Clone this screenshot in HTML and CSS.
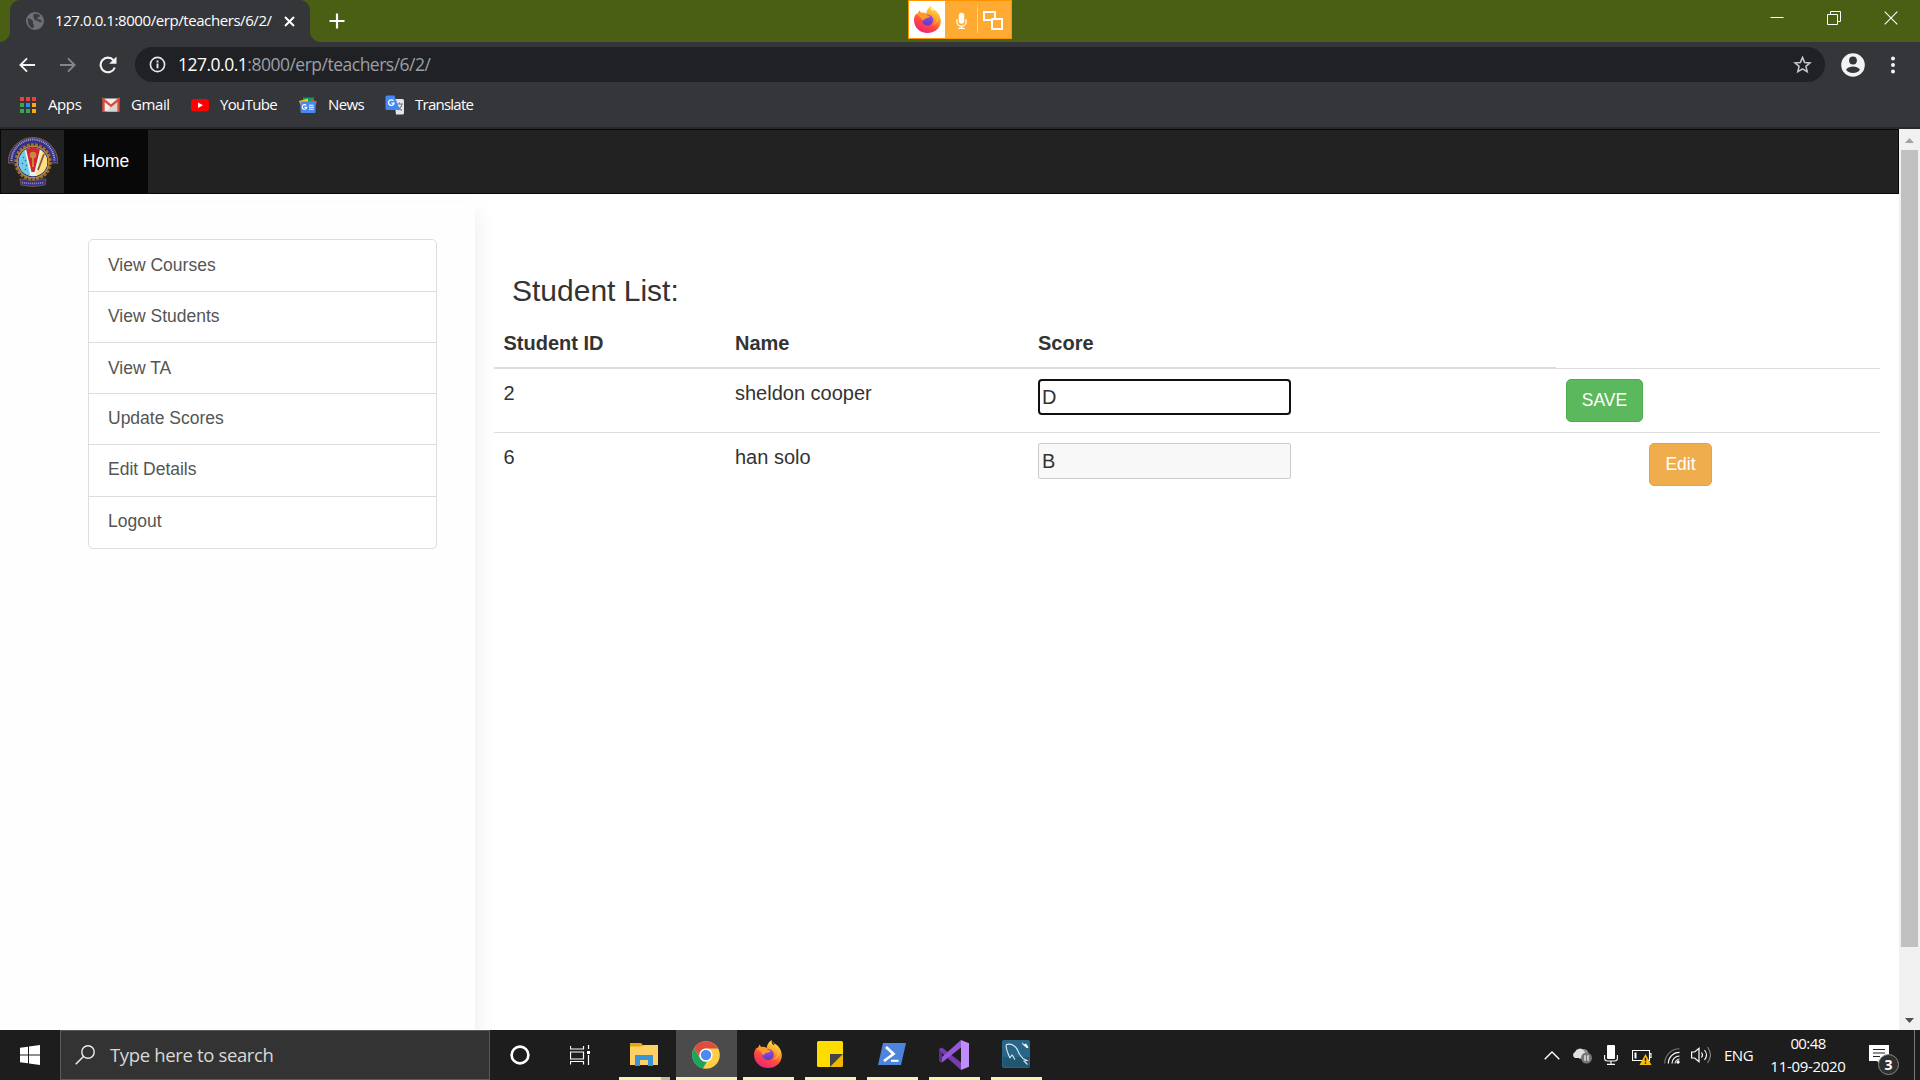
FILE: index.html
```html
<!DOCTYPE html>
<html lang="en">
<head>
<meta charset="utf-8">
<title>127.0.0.1:8000/erp/teachers/6/2/</title>
<link rel="stylesheet" href="styles.css">
</head>
<body>
<svg width="0" height="0" class="defs" aria-hidden="true">
  <defs>
    <linearGradient id="ffBody" x1=".8" y1="0" x2=".3" y2="1"><stop offset="0" stop-color="#fff04a"/><stop offset=".35" stop-color="#ffa62b"/><stop offset=".65" stop-color="#ff4a3d"/><stop offset="1" stop-color="#f0207f"/></linearGradient>
    <linearGradient id="ffCore" x1="0" y1="0" x2="0" y2="1"><stop offset="0" stop-color="#a04fe0"/><stop offset="1" stop-color="#5b39c8"/></linearGradient>
    <clipPath id="crestDisc"><circle cx="25" cy="25" r="14.200"/></clipPath>
    <symbol id="firefox" viewBox="0 0 28 28">
      <path fill="url(#ffBody)" d="M17.8 0c-.6 2.6.3 4 2 5.200.5-.3.900-1 .9-1.700 3.800 2.300 7 6.200 7.100 12C27.900 22.500 21.800 28 14 28S0 22.300 0 14.500c0-2.800 1.200-5.400 2.600-7.100L3.100 9 5.800 4.200c.2 1.400.900 2.100 1.700 2.700 2-.4 3.700 0 5.200 1C13 5 14.500 1.500 17.800 0z"/>
      <path fill="#ffc02e" d="M17.800 0c1 4.500 5.200 6 5.900 10.500.9 5-2.300 8.500-5.300 9.400 5-.6 8.500-5.500 6-11.500-1-2.500-5-4.500-6.600-8.400z"/>
      <circle cx="14" cy="14.500" r="5.800" fill="url(#ffCore)"/>
      <path fill="#ff9a2a" d="M2.600 8.200C6.500 6.300 11 6.600 13.700 9.700l2.900.7c-.9 2-3 2.200-5.200 2.600-.8 1-1 1.700-2.300 2.300-1.300-3.100-3.500-5.200-6.500-7.100z"/>
    </symbol>
  </defs>
</svg>

<header class="browser">
  <div class="titlebar">
    <div class="tab">
      <svg class="tab-globe" viewBox="0 0 18 18"><circle cx="9" cy="9" r="9" fill="#6d7074"/><path fill="#3a3b3f" d="M2 6c1.500 1 3 1 4.500 2.500C8 10 6 11 7.500 12.500 9 13.500 7.500 15 7 16.300 3.500 15.500 1.500 12 2 6zM8 2c3-.8 5 .3 6.500 2-1 1-2 .5-3 1.500s.5 2 2 2 2 1.500 2.800 2.500c-.8-.2-2.600.7-3.800-.5C11 8 8.500 8.500 8 6.500 7.800 5 6.500 3.500 8 2z"/></svg>
      <span class="tab-title">127.0.0.1:8000/erp/teachers/6/2/</span>
      <svg class="tab-close" viewBox="0 0 11 11"><path d="M1 1l9 9M10 1l-9 9" stroke="#fff" stroke-width="2"/></svg>
    </div>
    <svg class="new-tab" viewBox="0 0 16 16"><path d="M8 .5v15M.5 8h15" stroke="#fff" stroke-width="2.200"/></svg>
    <div class="window-controls">
      <svg viewBox="0 0 14 14"><path d="M.5 6.500h13" stroke="#fff"/></svg>
      <svg viewBox="0 0 14 14"><path d="M.5 3.500h10v10h-10zM3.500 3.500v-3h10v10h-3" fill="none" stroke="#fff"/></svg>
      <svg viewBox="0 0 14 14"><path d="M.7.7l12.600 12.600M13.300.7L.7 13.300" stroke="#fff" stroke-width="1.100"/></svg>
    </div>
    <div class="share-indicator">
      <div class="share-logo"><svg viewBox="0 0 28 28"><use href="#firefox"/></svg></div>
      <div class="share-part share-mic"><svg viewBox="0 0 12 18"><rect x="3" y="0" width="6" height="12" rx="3" fill="#fff"/><path d="M1 7v2.500a5 5 0 0 0 10 0V7M6 14v3M2.500 17h7" fill="none" stroke="#fff" stroke-width="1.400"/></svg></div>
      <div class="share-part share-windows"><svg viewBox="0 0 21 19"><path d="M8 9H1V1h11v6" fill="none" stroke="#fff" stroke-width="2"/><path d="M9 8h10v10H9z" fill="none" stroke="#fff" stroke-width="2"/></svg></div>
    </div>
  </div>
  <div class="toolbar">
    <svg class="nav-icon back" viewBox="0 0 18 16"><path d="M17 8H2M8.500 1L1.500 8l7 7" fill="none" stroke="#f1f3f4" stroke-width="2"/></svg>
    <svg class="nav-icon forward" viewBox="0 0 18 16"><path d="M1 8h15M9.500 1l7 7-7 7" fill="none" stroke="#85868a" stroke-width="2"/></svg>
    <svg class="nav-icon reload" viewBox="0 0 18 18"><path d="M15.800 11.500A7.300 7.300 0 1 1 14.500 4.200" fill="none" stroke="#f1f3f4" stroke-width="2.100"/><path d="M17.500.5v7.300h-7.300z" fill="#f1f3f4"/></svg>
    <div class="omnibox">
      <svg class="info" viewBox="0 0 18 18"><circle cx="9" cy="9" r="7.500" fill="none" stroke="#e8eaed" stroke-width="1.700"/><path d="M9 8v5M9 4.800v2" stroke="#e8eaed" stroke-width="2"/></svg>
      <span class="url"><b>127.0.0.1</b>:8000/erp/teachers/6/2/</span>
      <svg class="star" viewBox="0 0 20 20"><path d="M10 2.500l2.200 5.300 5.700.5-4.300 3.700 1.300 5.600L10 14.600l-4.900 3 1.300-5.600-4.300-3.700 5.700-.5z" fill="none" stroke="#c5c7ca" stroke-width="1.600"/></svg>
    </div>
    <svg class="profile" viewBox="0 0 24 24"><circle cx="12" cy="12" r="11.800" fill="#f1f3f4"/><circle cx="12" cy="7.500" r="3.900" fill="#35363a"/><path d="M5 16.800c1.500-2.500 4.500-3.300 7-3.300s5.500.8 7 3.300c-1.700 2.300-4.200 3.300-7 3.300s-5.300-1-7-3.300z" fill="#35363a"/></svg>
    <svg class="kebab" viewBox="0 0 4 18"><g fill="#f1f3f4"><circle cx="2" cy="2.500" r="2"/><circle cx="2" cy="9" r="2"/><circle cx="2" cy="15.500" r="2"/></g></svg>
  </div>
  <nav class="bookmarks">
    <span class="bookmark apps"><svg viewBox="0 0 18 18"><g fill="#ea4335"><path d="M1 1h4v4H1zM7 1h4v4H7zM13 1h4v4h-4z"/></g><path fill="#34a853" d="M1 7h4v4H1zM1 13h4v4H1zM7 13h4v4H7z"/><path fill="#2a8cf0" d="M7 7h4v4H7z"/><path fill="#fbab09" d="M13 7h4v4h-4zM13 13h4v4h-4z"/></svg><span>Apps</span></span>
    <span class="bookmark gmail"><svg viewBox="0 0 18 18"><path fill="#f1efed" d="M1 2.500h16v13H1z"/><path fill="#d9d5d2" d="M9 10l6-4.500v10H5z"/><path d="M1.500 16V3.500L9 9.800l7.500-6.300V16" fill="none" stroke="#dc4b3e" stroke-width="2.400"/></svg><span>Gmail</span></span>
    <span class="bookmark youtube"><svg viewBox="0 0 18 18"><rect y="3" width="18" height="12.500" rx="3" fill="#f00"/><path d="M7 6.500l5 2.800-5 2.800z" fill="#fff"/></svg><span>YouTube</span></span>
    <span class="bookmark news"><svg viewBox="0 0 18 18"><path fill="#0c9d58" d="M4 1.500h11V9H4z"/><path fill="#fbc02d" d="M0 5l9-2.500V9H1.500z"/><path fill="#e64a3c" d="M18 5.500L12 3.500v6h4.500z"/><rect x="1.500" y="5.500" width="15" height="11.500" rx="1" fill="#4a87ee"/><path d="M7.200 9.400a2.300 2.300 0 1 0 .5 2H5.500M10 9.200h4.500M10 11.200h5M10 13.300h4.500" fill="none" stroke="#fff" stroke-width="1.100"/></svg><span>News</span></span>
    <span class="bookmark translate"><svg viewBox="0 0 20 20"><path fill="#e4e5e7" d="M9 4h8.500a1.500 1.500 0 0 1 1.500 1.500V18a1.500 1.500 0 0 1-1.500 1.500H11z"/><path d="M11 9h7M14.500 7.500V9M17 9c-.5 3-2.500 5-4 6M12.500 11c1 2 3 3.500 4.500 4.500" stroke="#687985" stroke-width="1.100" fill="none"/><path fill="#4387f3" d="M2 .5h7.500l5 14.500H2a1.500 1.500 0 0 1-1.500-1.500V2A1.500 1.500 0 0 1 2 .5z"/><path d="M8.500 5.800a2.800 2.800 0 1 0 .6 2.400H6.400" fill="none" stroke="#fff" stroke-width="1.300"/></svg><span>Translate</span></span>
  </nav>
</header>

<div class="viewport">
  <div class="page">
    <nav class="navbar">
      <a class="brand"><svg viewBox="0 0 50 50">
        <path d="M3 26A22 22.500 0 0 1 47 26" fill="none" stroke="#34308c" stroke-width="6"/>
        <path d="M0 26A25 25.500 0 0 1 50 26M0 26h6M44 26h6" fill="none" stroke="#806032" stroke-width="1"/>
        <path d="M3.500 24A21.500 21.500 0 0 1 46.500 24" fill="none" stroke="#a29ec4" stroke-width="2" stroke-dasharray="1.100 .8"/>
        <circle cx="25" cy="25" r="17.500" fill="#2e2b78" stroke="#9a7032" stroke-width="2.600" stroke-dasharray="3 1.200"/>
        <circle cx="25" cy="25" r="15.800" fill="none" stroke="#b88935" stroke-width="1.500"/>
        <g clip-path="url(#crestDisc)">
          <path d="M10 10h30v30H10z" fill="#e9f3ee"/>
          <path d="M10 10h6L22.500 40H10z" fill="#6fcbea"/>
          <path d="M34 10h6v30H27.500z" fill="#ffdf84"/>
          <path d="M17.500 10h15L26.500 35h-3z" fill="#cf2630"/>
          <path d="M36 17l-6 16" stroke="#765f43" stroke-width="1.800"/>
          <path d="M15 20l1 1m-2 5l1 1m3 1l1 1m-2 3l1 1m-1-10l1 1" stroke="#277ca0" stroke-width="1.200"/>
        </g>
        <circle cx="25" cy="18" r="3.300" fill="#c78b3e"/><path d="M25 20v10" stroke="#d9963d" stroke-width="1.600"/>
        <path d="M12 42q13 3 26 0l-1 6q-12 3-24 0z" fill="#34308c" stroke="#85603a" stroke-width=".8"/><path d="M14 45.500q11 2 22 0" fill="none" stroke="#8580ac" stroke-width="1.800" stroke-dasharray="1.200 .8"/>
      </svg></a>
      <a class="nav-home">Home</a>
    </nav>
    <div class="columns">
      <aside class="sidebar">
        <ul class="list-group">
          <li>View Courses</li><li>View Students</li><li>View TA</li><li>Update Scores</li><li>Edit Details</li><li>Logout</li>
        </ul>
      </aside>
      <main class="content">
        <h3>Student List:</h3>
        <div class="table">
          <div class="row head"><b>Student ID</b><b>Name</b><b>Score</b><b class="blank"></b></div>
          <div class="row"><span>2</span><span>sheldon cooper</span><span><input class="score focused" value="D"></span><span><button class="btn save">SAVE</button></span></div>
          <div class="row"><span>6</span><span>han solo</span><span><input class="score" value="B" disabled></span><span><button class="btn edit">Edit</button></span></div>
        </div>
      </main>
    </div>
  </div>
  <div class="scrollbar">
    <svg class="arrow" viewBox="0 0 21 21"><path d="M6 14l4.500-5 4.500 5z" fill="#a3a3a3"/></svg>
    <div class="thumb"></div>
    <svg class="arrow down" viewBox="0 0 21 21"><path d="M6 9l4.500 5L15 9z" fill="#505050"/></svg>
  </div>
</div>

<footer class="taskbar">
  <div class="start"><svg viewBox="0 0 20 20"><path fill="#fff" d="M0 2.800l8-1.100V9.500H0zM9 1.500L20 0v9.500H9zM0 10.500h8v7.800l-8-1.100zM9 10.500h11V20L9 18.500z"/></svg></div>
  <div class="search"><svg viewBox="0 0 20 20"><circle cx="13" cy="7" r="6.200" fill="none" stroke="#eee" stroke-width="1.400"/><path d="M8.500 11.500L.7 19.300" stroke="#eee" stroke-width="1.500"/></svg><span>Type here to search</span></div>
  <div class="task-plain"><svg class="s20" viewBox="0 0 20 20"><circle cx="10" cy="10" r="8.400" fill="none" stroke="#fff" stroke-width="2.600"/></svg></div>
  <div class="task-plain"><svg class="s20" viewBox="0 0 20 20"><path d="M.5 1v3h13V1M.5 7h13v7H.5zM.5 19.500v-3h13v3M18.500 0v4M18.500 10v10" fill="none" stroke="#fff" stroke-width="1.200"/><path d="M17 6h3v3h-3z" fill="#fff"/></svg></div>
  <div class="tasks">
    <div class="task explorer"><svg viewBox="0 0 28 24"><path d="M0 1h11l2.500 2.500H28V23H0z" fill="#e7a40b"/><path d="M0 4.500h11L14 3h14v20H0z" fill="#ffd164"/><path d="M5 24V13h18v11h-5v-6h-8v6z" fill="#3a94d5"/></svg></div>
    <div class="task chrome"><svg viewBox="0 0 28 28"><circle cx="14" cy="14" r="13.800" fill="#ffcd46"/><path d="M2 7a13.800 13.800 0 0 1 24 .5H14A6.500 6.500 0 0 0 8 17z" fill="#dc4e41"/><path d="M2 7l6.400 11A6.500 6.500 0 0 0 15 20.500l-4.200 7A13.800 13.800 0 0 1 2 7z" fill="#1da362"/><circle cx="14" cy="14" r="6.600" fill="#fff"/><circle cx="14" cy="14" r="5.200" fill="#4c8bf5"/></svg></div>
    <div class="task"><svg viewBox="0 0 28 28"><use href="#firefox"/></svg></div>
    <div class="task"><svg viewBox="0 0 28 28"><path d="M1 2.500Q1 1 2.500 1h23Q27 1 27 2.500V14L14 27H2.500Q1 27 1 25.500z" fill="#ffdc00"/><path d="M14 14h13L14 27z" fill="#444"/><path d="M27 14v11.500q0 1.500-1.500 1.500H14z" fill="#f2b705"/></svg></div>
    <div class="task"><svg viewBox="0 0 28 28"><path d="M5 3h23l-5 22H0z" fill="#4d84dc"/><path d="M8 7l7.500 7L6 21" fill="none" stroke="#fff" stroke-width="2.700"/><path d="M13 20.800h7.500" stroke="#fff" stroke-width="2"/></svg></div>
    <div class="task vs"><svg viewBox="0 0 30 30"><path d="M0 9l3-1.500L22 22.500V30L3 13v9L0 21z" fill="#793bb1"/><path d="M0 21l3 1.500L22 7.500V0L3 17 0 15z" fill="#9758d5"/><path d="M22 0l8 3.300v23.400L22 30z" fill="#c08bfa"/><path d="M0 9l3 4v9l-3-1z" fill="#5c2a91"/></svg></div>
    <div class="task"><svg viewBox="0 0 28 28"><rect width="28" height="28" rx="2" fill="#286589"/><path d="M1 17h26v9q0 1-1 1H2q-1 0-1-1z" fill="#20566f"/><path d="M8 18C6 13 3 8 4.500 4.500 9 3 14 6 16 11c1 4 3 5 5 7.500l4 2-3 .5 3.500 3.500M8 18l2-3c1.500 1 1.500 3 3 4.500" fill="none" stroke="#d9e8ef" stroke-width="1.100"/><path d="M20 2l2 2.500 2-1 2.500 4-1.500.8-3.500-3-1-1z" fill="#fff"/></svg></div>
  </div>
  <div class="tray">
    <svg class="tray-up" viewBox="0 0 16 9"><path d="M.7 8.300L8 1l7.300 7.300" fill="none" stroke="#fff" stroke-width="1.400"/></svg>
    <svg class="tray-cloud" viewBox="0 0 20 18"><path d="M7 6a5 5 0 0 1 9.500 1v6H7z" fill="#8e8e8e"/><path d="M3 12a3.300 3.300 0 0 1 0-6 5 5 0 0 1 9-1l5 7z" fill="#e1e1e1"/><circle cx="14.500" cy="12" r="5.500" fill="#777"/><path d="M13 9.200v5.600M16 9.200v5.600" stroke="#fff" stroke-width="1.200"/></svg>
    <svg class="tray-mic" viewBox="0 0 14 20"><rect x="3" width="8" height="14" rx="1" fill="#fff"/><path d="M.6 10v3.500q0 2.500 3 2.500h6.800q3 0 3-2.500V10M7 16v3.500M3 19.400h8" fill="none" stroke="#fff" stroke-width="1.100"/></svg>
    <svg class="tray-battery" viewBox="0 0 20 16"><path d="M.5 1.500h17v10H.5zM17.500 4.500H19v4h-1.500" fill="none" stroke="#fff" stroke-width="1.100"/><path d="M2.500 3.500h2v6h-2z" fill="#fff"/><path d="M13.500 5L19.500 16h-12z" fill="#fbbc09"/><path d="M13.500 8.800v3.400M13.500 13.300v1.400" stroke="#222" stroke-width="1.400"/></svg>
    <svg class="tray-wifi" viewBox="0 0 16 16"><g fill="none"><path d="M.7 15.500A14.800 14.800 0 0 1 15.500.7" stroke="#777" stroke-width="1.100"/><path d="M4.300 15.500A11.200 11.200 0 0 1 15.500 4.300M8 15.500A7.500 7.500 0 0 1 15.500 8" stroke="#fff" stroke-width="1.200"/><path d="M11 15.500a4.500 4.500 0 0 1 4.500-4.500" stroke="#fff"/></g><circle cx="14" cy="14" r="1.700" fill="#fff"/></svg>
    <svg class="tray-sound" viewBox="0 0 21 18"><path d="M.6 6h3L8 2.200v13.600L3.600 12h-3z" fill="none" stroke="#fff" stroke-width="1.200"/><path d="M10.500 6.500q2 2.500 0 5M13.500 4q4 5 0 10" fill="none" stroke="#fff" stroke-width="1.100"/><path d="M16.500 1q6 8 0 16" fill="none" stroke="#888" stroke-width="1.100"/></svg>
    <span class="lang">ENG</span>
    <div class="clock"><span>00:48</span><span class="date">11-09-2020</span></div>
    <div class="notify"><svg viewBox="0 0 20 20"><path d="M0 0h20v16h-8v4l-4-4H0z" fill="#fff"/><path d="M4 4.500h12M4 8h12M4 11.500h7" stroke="#222" stroke-width="1.200"/></svg><span class="count">3</span></div>
    <div class="show-desktop"></div>
  </div>
</footer>
</body>
</html>
```
FILE: styles.css
```css
* { box-sizing: border-box; }
body { margin: 0; width: 1920px; height: 1080px; overflow: hidden; display: flex; flex-direction: column; background: #fff; font-family: "Liberation Sans", Arial, sans-serif; color: #333; }
svg { display: block; flex: none; }
.defs { position: absolute; }

.browser { height: 129px; background: #35363a; border-bottom: 2px solid #28292c; font-family: "Open Sans", "Noto Sans", sans-serif; flex: none; }
.titlebar { height: 42px; background: #4a5e14; display: flex; align-items: center; padding-left: 10px; position: relative; }
.tab { position: relative; width: 300px; height: 42px; background: #35363a; border-radius: 10px 10px 0 0; display: flex; align-items: center; padding-left: 16px; color: #fff; }
.tab::before, .tab::after { content: ""; position: absolute; bottom: 0; width: 10px; height: 10px; }
.tab::before { left: -10px; background: radial-gradient(circle at 0 0, transparent 9.500px, #35363a 10px); }
.tab::after { right: -10px; background: radial-gradient(circle at 100% 0, transparent 9.500px, #35363a 10px); }
.tab-globe { width: 18px; height: 18px; }
.tab-title { width: 229px; padding: 0 0 2px 11px; font-size: 15px; letter-spacing: -.42px; white-space: nowrap; }
.tab-close { width: 11px; height: 11px; margin-left: 11px; }
.new-tab { width: 16px; height: 16px; margin-left: 19px; }
.window-controls { margin-left: auto; display: flex; gap: 43px; padding: 0 22px 6px 0; }
.window-controls svg { width: 14px; height: 14px; }
.share-indicator { position: absolute; left: 908px; top: 0; width: 104px; height: 39px; display: flex; background: #ffaa33; border: 1px solid #ff9500; }
.share-logo { width: 36px; background: #fff; display: grid; place-items: center; }
.share-logo svg { width: 27px; height: 27px; }
.share-part { display: grid; place-items: center; width: 33px; }
.share-mic { border-right: 1px solid #ffd394; margin: 5px 0; padding: 2px 0 0 1px; }
.share-mic svg { width: 11px; height: 18px; }
.share-windows { width: 31px; padding-top: 2px; }
.share-windows svg { width: 21px; height: 19px; }

.toolbar { height: 45px; display: flex; align-items: center; padding-left: 19px; }
.nav-icon { width: 17px; height: 16px; }
.forward { margin-left: 23px; }
.reload { width: 18px; height: 18px; margin-left: 23px; }
.omnibox { width: 1690px; height: 35px; margin-left: 18px; background: #202124; border-radius: 18px; display: flex; align-items: center; padding: 0 13px 0 14px; }
.info { width: 17px; height: 17px; }
.url { margin-left: 12px; padding-bottom: 1px; color: #9aa0a6; font-size: 17.500px; letter-spacing: -.5px; white-space: nowrap; }
.url b { font-weight: 400; color: #fff; }
.star { width: 19px; height: 19px; margin-left: auto; }
.profile { width: 24px; height: 24px; margin-left: 16px; }
.kebab { width: 4px; height: 18px; margin-left: 26px; }

.bookmarks { height: 36px; display: flex; align-items: center; color: #fff; font-size: 15px; padding-left: 19px; }
.bookmark { display: flex; align-items: center; gap: 11px; white-space: nowrap; letter-spacing: -.4px; }
.bookmark > span { padding-bottom: 2px; }
.bookmark svg { width: 18px; height: 18px; }
.apps { width: 83px; }
.gmail { width: 89px; }
.youtube { width: 108px; letter-spacing: -.65px; }
.news { width: 86px; letter-spacing: -.6px; }
.translate { letter-spacing: -.75px; gap: 10px; }
.bookmark.translate svg { width: 20px; height: 20px; }

.viewport { height: 901px; display: flex; flex: none; }
.page { width: 1899px; background: #fff; display: flex; flex-direction: column; }
.navbar { height: 65px; background: #222; border: 1px solid #080808; display: flex; flex: none; }
.brand { width: 63px; padding: 7px 0 0 7px; }
.brand svg { width: 50px; height: 50px; }
.nav-home { width: 84px; display: grid; place-items: center; background: #080808; color: #fff; font-size: 17.500px; }
.columns { flex: 1; display: flex; overflow: hidden; padding-top: 8px; }
.sidebar { width: 475px; padding: 37px 38px 0 88px; box-shadow: 0 10px 20px rgba(0,0,0,.09); background: #fefefe; }
.list-group { list-style: none; margin: 0; padding: 0; width: 349px; border: 1px solid #ddd; border-radius: 5px; background: #fff; font-size: 17.500px; color: #555; }
.list-group li { height: 51px; padding-left: 19px; line-height: 48px; border-bottom: 1px solid #ddd; }
.list-group li:first-child { height: 52px; line-height: 50px; }
.list-group li:nth-child(3) { line-height: 50px; }
.list-group li:nth-child(4) { line-height: 49px; }
.list-group li:nth-child(5) { height: 52px; line-height: 49px; }
.list-group li:last-child { border-bottom: 0; }
.content { width: 1405px; padding-left: 19px; }
.content h3 { margin: 71px 0 0 18px; height: 46px; line-height: 36px; font-weight: 400; font-size: 30px; }
.table { font-size: 20px; }
.row { display: grid; grid-template-columns: 231px 303px 528px 1fr; height: 64px; border-top: 1px solid #ddd; }
.row > * { padding: 10px 0 0 10px; line-height: 28px; }
.row > :first-child { padding-left: 9.500px; }
.row.head { height: 49px; border-top: 0; }
.row.head b { border-bottom: 1px solid #ddd; height: 49px; padding-top: 10px; }
.row.head .blank { border-bottom: 0; }
.score { display: block; width: 253px; height: 36px; padding: 1px 3px; font: 20px "Liberation Sans", Arial, sans-serif; color: #333; border: 1px solid #ccc; border-radius: 2px; background: #f8f8f8; }
.score.focused { border: 2px solid #101010; padding: 0 2px; background: #fff; border-radius: 4px; }
.btn { display: block; height: 43px; padding: 0; font: 17.500px "Liberation Sans", Arial, sans-serif; color: #fff; border: 1px solid; border-radius: 5px; }
.save { width: 77px; background: #5cb85c; border-color: #4cae4c; }
.edit { width: 63px; margin-left: 83px; background: #f0ad4e; border-color: #eea236; }
.scrollbar { width: 21px; background: #f1f1f1; display: flex; flex-direction: column; align-items: center; }
.arrow { width: 21px; height: 21px; }
.thumb { width: 17px; height: 797px; background: #c1c1c1; }
.down { margin-top: auto; }

.taskbar { height: 50px; flex: none; background: #1d1d1d; display: flex; color: #fff; font-family: "Open Sans", "Noto Sans", sans-serif; }
.start { width: 60px; display: grid; place-items: center; }
.start svg { width: 20px; height: 20px; }
.search { width: 430px; background: #333; border: 1px solid #5a5a5a; display: flex; align-items: center; padding-left: 14px; gap: 15px; color: #d8d8d8; font-size: 18.500px; letter-spacing: -.35px; white-space: nowrap; }
.search span { padding-bottom: 2px; }
.search svg { width: 20px; height: 20px; }
.task-plain { width: 60px; display: grid; place-items: center; }
.s20 { width: 20px; height: 20px; }
.tasks { display: flex; gap: 11px; padding-left: 9px; }
.task { width: 51px; display: flex; justify-content: center; padding: 10px 2px 0 0; border-bottom: 3px solid #e9f7b1; }
.task svg { width: 28px; height: 28px; }
.explorer svg { height: 24px; margin-top: 2px; }
.explorer { border-image: linear-gradient(90deg, #e9f7b1 40px, #b7c28e 40px) 3; border-width: 0 0 3px; border-style: solid; }
.chrome { width: 61px; margin: 0 -5px; background: #4b4b4b; padding-top: 11px; }
.task.vs svg { width: 30px; height: 30px; }
.tray { margin-left: auto; display: flex; align-items: center; }
.tray-up { width: 16px; height: 9px; }
.tray-cloud { width: 20px; height: 18px; margin-left: 12px; }
.tray-mic { width: 14px; height: 20px; margin-left: 12px; }
.tray-battery { width: 20px; height: 16px; margin: 4px 0 0 14px; }
.tray-wifi { width: 16px; height: 16px; margin: 2px 0 0 12px; }
.tray-sound { width: 21px; height: 18px; margin-left: 11px; }
.lang { width: 30px; margin-left: 12px; font-size: 15px; letter-spacing: -.5px; }
.clock { width: 96px; margin-left: 6px; display: flex; flex-direction: column; align-items: center; font-size: 15px; line-height: 23px; letter-spacing: -.6px; }
.clock .date { letter-spacing: -.3px; }
.notify { position: relative; width: 20px; margin-left: 13px; }
.notify svg { width: 20px; height: 20px; }
.count { position: absolute; left: 9px; top: 9px; width: 21px; height: 21px; border: 1px solid #888; border-radius: 50%; background: #303030; text-align: center; font: bold 14px/19px "Open Sans", sans-serif; }
.show-desktop { width: 6px; height: 50px; border-left: 1px solid #777; margin-left: 25px; }
```
